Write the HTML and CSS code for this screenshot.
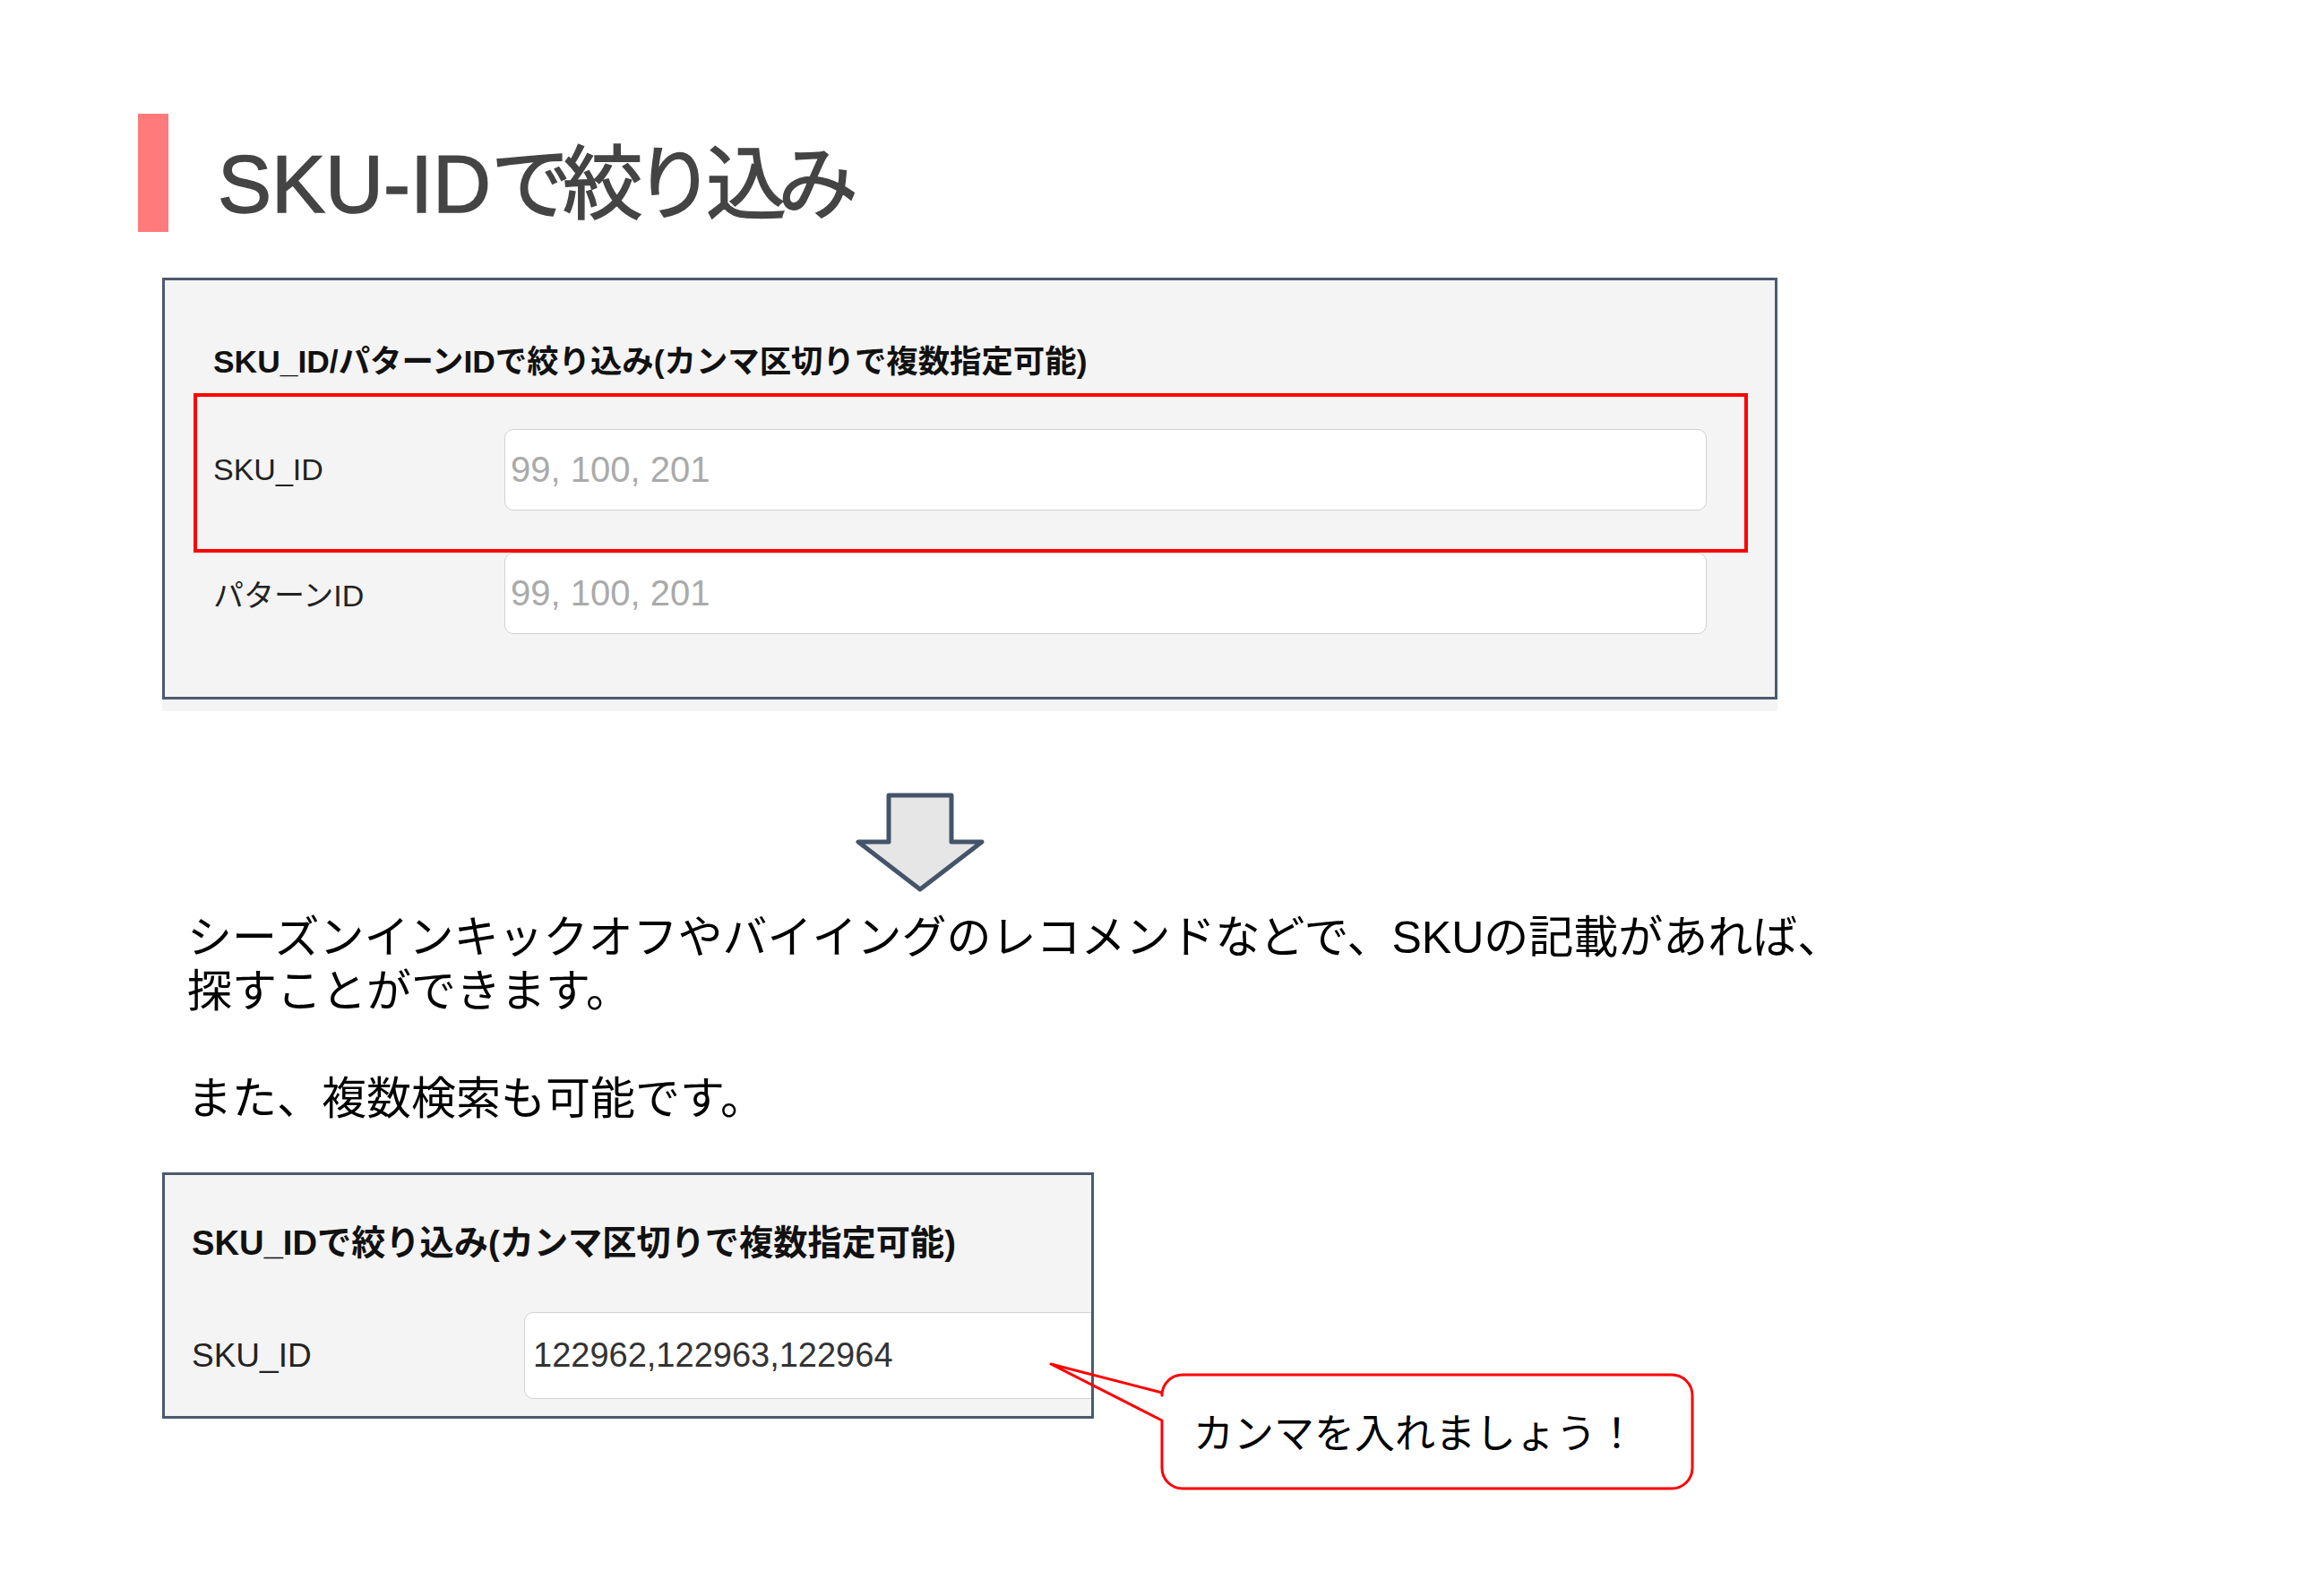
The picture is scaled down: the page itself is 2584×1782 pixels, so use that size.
FILE: index.html
```html
<!DOCTYPE html>
<html lang="ja">
<head>
  <meta charset="UTF-8" />
  <title>SKU-IDで絞り込み</title>
  <link rel="stylesheet" href="styles.css">
</head>
<body>
  <div class="slide">
    <h1 class="slide-title">
      <span class="title-bar"></span>
      <span class="title-text">SKU-ID<span class="title-jp">で絞り込み</span></span>
    </h1>

    <div class="filter-panel">
      <h3 class="panel-heading">SKU_ID/パターンIDで絞り込み(カンマ区切りで複数指定可能)</h3>
      <div class="form-row highlight">
        <label for="skuId">SKU_ID</label>
        <input type="text" id="skuId" placeholder="99, 100, 201" />
      </div>
      <div class="form-row">
        <label for="patternId">パターンID</label>
        <input type="text" id="patternId" placeholder="99, 100, 201" />
      </div>
    </div>

    <svg class="down-arrow" width="150" height="115" viewBox="0 0 150 115">
      <polygon points="42,5 112,5 112,57 146,57 77,110 8,57 42,57" />
    </svg>

    <p class="note">
      シーズンインキックオフやバイイングのレコメンドなどで、SKUの記載があれば、<br>
      探すことができます。<br>
      <br>
      また、複数検索も可能です。
    </p>

    <div class="example">
      <div class="filter-panel compact">
        <h3 class="panel-heading">SKU_IDで絞り込み(カンマ区切りで複数指定可能)</h3>
        <div class="form-row">
          <label for="skuIdSample">SKU_ID</label>
          <input type="text" id="skuIdSample" value="122962,122963,122964" />
        </div>
      </div>

      <div class="callout">
        <svg width="730" height="155" viewBox="0 0 730 155">
          <path d="M155 21 H701 A23 23 0 0 1 724 44 V125 A23 23 0 0 1 701 148 H155 A23 23 0 0 1 132 125 V72 L8 9 L132 41 V44 A23 23 0 0 1 155 21 Z" />
        </svg>
        <span class="callout-text">カンマを入れましょう！</span>
      </div>
    </div>
  </div>
</body>
</html>
```

FILE: styles.css
```css
body {
  margin: 0;
  background-color: #fff;
  font-family: "Liberation Sans", "Noto Sans CJK JP", sans-serif;
}
.slide {
  padding: 127px 0 200px 0;
}
.slide-title {
  display: flex;
  align-items: center;
  height: 132px;
  margin: 0 0 0 154px;
  font-weight: normal;
}
.title-bar {
  width: 34px;
  height: 132px;
  background-color: #ff7b7b;
}
.title-text {
  margin-left: 55px;
  padding-top: 26px;
  font-size: 90px;
  line-height: 90px;
  color: #444;
  -webkit-text-stroke: 1.5px #444;
  white-space: nowrap;
}
.title-jp {
  letter-spacing: -10px;
}
.filter-panel {
  box-sizing: border-box;
  width: 1803px;
  margin: 51px 0 0 181px;
  padding: 0 30px 70px 32px;
  border: 3px solid #4b5a6e;
  background-color: #f4f4f4;
  box-shadow: 0 13px 0 #f4f4f4;
}
.panel-heading {
  margin: 71px 0 15px 22px;
  font-size: 35.4px;
  line-height: 40px;
  font-weight: bold;
  color: #111;
  white-space: nowrap;
}
.form-row {
  display: flex;
  align-items: center;
  padding: 0 46px 0 22px;
}
.form-row.highlight {
  padding: 36px 42px 43px 18px;
  border: 4px solid #ff0000;
}
.form-row label {
  flex: 0 0 325px;
  font-size: 34px;
  color: #222;
}
.form-row input {
  flex: 1;
  box-sizing: border-box;
  height: 91px;
  padding: 0 6px;
  border: 1.5px solid #d2d2d2;
  border-radius: 10px;
  background-color: #fff;
  font-family: "Liberation Sans", "Noto Sans CJK JP", sans-serif;
  font-size: 40px;
  color: #333;
}
.form-row input::placeholder {
  color: #aaa;
}
.down-arrow {
  display: block;
  margin: 102px 0 0 950px;
}
.down-arrow polygon {
  fill: #e6e6e6;
  stroke: #44546a;
  stroke-width: 5;
  stroke-linejoin: round;
}
.note {
  margin: 19px 0 0 209px;
  font-size: 50px;
  line-height: 60px;
  color: #000;
  white-space: nowrap;
}
.example {
  position: relative;
  margin: 52px 0 0 181px;
}
.filter-panel.compact {
  width: 1040px;
  margin: 0;
  padding: 0 0 19px 30px;
  overflow: hidden;
  box-shadow: none;
}
.compact .panel-heading {
  margin: 53px 0 54px 0;
  font-size: 38.2px;
  line-height: 46px;
}
.compact .form-row {
  padding: 0;
}
.compact .form-row label {
  flex: 0 0 371px;
  font-size: 37px;
}
.compact .form-row input {
  height: 97px;
  margin-right: -20px;
  padding-left: 9px;
  font-size: 38px;
}
.callout {
  position: absolute;
  left: 984px;
  top: 205px;
  width: 730px;
  height: 155px;
}
.callout svg {
  position: absolute;
  left: 0;
  top: 0;
}
.callout path {
  fill: none;
  stroke: #ff0000;
  stroke-width: 3;
  stroke-linejoin: round;
}
.callout-text {
  position: relative;
  display: block;
  padding: 54px 0 0 167px;
  font-family: "Noto Sans CJK JP", sans-serif;
  font-size: 45px;
  line-height: 60px;
  color: #000;
  white-space: nowrap;
}
```
